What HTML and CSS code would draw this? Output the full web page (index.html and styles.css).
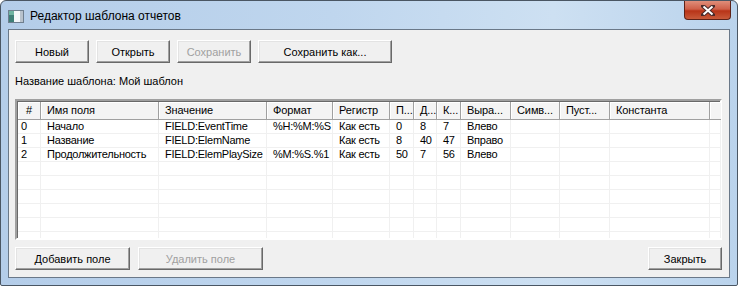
FILE: index.html
```html
<!DOCTYPE html>
<html lang="ru">
<head>
<meta charset="UTF-8">
<title>Редактор шаблона отчетов</title>
<link rel="stylesheet" href="styles.css">
</head>
<body>

<div class="window">
    <div class="titlebar">
        <svg class="app-icon" width="16" height="13" viewBox="0 0 16 13">
            <rect x="0.5" y="0.5" width="15" height="12" fill="#f4f7fa" stroke="#6f7f8f"/>
            <rect x="1" y="1" width="5" height="11" fill="#3f7f78"/>
            <rect x="1" y="1" width="5" height="4" fill="#6fb3a2"/>
            <rect x="12" y="1" width="3" height="11" fill="#b8c2cc"/>
        </svg>
        <span class="title">Редактор шаблона отчетов</span>
        <div class="close-btn">
            <svg width="14" height="11" viewBox="0 0 14 11">
                <path d="M2 1 L12 10 M12 1 L2 10" stroke="#4a2a2a" stroke-width="4" stroke-linecap="square"/>
                <path d="M2.5 1.5 L11.5 9.5 M11.5 1.5 L2.5 9.5" stroke="#fff" stroke-width="2"/>
            </svg>
        </div>
    </div>

    <div class="client">
        <!-- Template actions -->
        <div class="toolbar">
            <button class="btn">Новый</button>
            <button class="btn">Открыть</button>
            <button class="btn" disabled>Сохранить</button>
            <button class="btn btn-wide">Сохранить как...</button>
        </div>

        <div class="template-name">Название шаблона: Мой шаблон</div>

        <!-- Field list -->
        <div class="listview">
            <div class="grid">
                <div class="hd">#</div>
                <div class="hd">Имя поля</div>
                <div class="hd">Значение</div>
                <div class="hd">Формат</div>
                <div class="hd">Регистр</div>
                <div class="hd">П...</div>
                <div class="hd">Д...</div>
                <div class="hd">К...</div>
                <div class="hd">Выра...</div>
                <div class="hd">Симв...</div>
                <div class="hd">Пуст...</div>
                <div class="hd">Константа</div>
                <div class="hd hd-last"></div>

                <div class="cell num">0</div>
                <div class="cell">Начало</div>
                <div class="cell">FIELD:EventTime</div>
                <div class="cell">%H:%M:%S</div>
                <div class="cell">Как есть</div>
                <div class="cell">0</div>
                <div class="cell">8</div>
                <div class="cell">7</div>
                <div class="cell">Влево</div>
                <div class="cell"></div>
                <div class="cell"></div>
                <div class="cell"></div>
                <div class="cell"></div>

                <div class="cell num">1</div>
                <div class="cell">Название</div>
                <div class="cell">FIELD:ElemName</div>
                <div class="cell"></div>
                <div class="cell">Как есть</div>
                <div class="cell">8</div>
                <div class="cell">40</div>
                <div class="cell">47</div>
                <div class="cell">Вправо</div>
                <div class="cell"></div>
                <div class="cell"></div>
                <div class="cell"></div>
                <div class="cell"></div>

                <div class="cell num">2</div>
                <div class="cell">Продолжительность</div>
                <div class="cell">FIELD:ElemPlaySize</div>
                <div class="cell">%M:%S.%1</div>
                <div class="cell">Как есть</div>
                <div class="cell">50</div>
                <div class="cell">7</div>
                <div class="cell">56</div>
                <div class="cell">Влево</div>
                <div class="cell"></div>
                <div class="cell"></div>
                <div class="cell"></div>
                <div class="cell"></div>

                <div class="fill"></div><div class="fill"></div><div class="fill"></div>
                <div class="fill"></div><div class="fill"></div><div class="fill"></div>
                <div class="fill"></div><div class="fill"></div><div class="fill"></div>
                <div class="fill"></div><div class="fill"></div><div class="fill"></div>
                <div class="fill"></div>
            </div>
        </div>

        <div class="footer">
            <button class="btn btn-add">Добавить поле</button>
            <button class="btn btn-del" disabled>Удалить поле</button>
            <button class="btn btn-close">Закрыть</button>
        </div>
    </div>
</div>

</body>
</html>
```

FILE: styles.css
```css
body {
    margin: 0;
    padding: 0;
    background-color: #fff;
    font-family: "Liberation Sans", Arial, sans-serif;
    font-size: 11px;
    color: #000;
}

/* Window frame */
.window {
    width: 738px;
    height: 286px;
    box-sizing: border-box;
    border: 1px solid #4a5663;
    border-radius: 6px 6px 2px 2px;
    background: linear-gradient(to right, #b4cde9 0%, #bfd6ee 45%, #cde0f2 75%, #bad3ec 100%);
    padding: 0 7px 7px 7px;
    display: flex;
    flex-direction: column;
}

.titlebar {
    height: 28px;
    display: flex;
    align-items: flex-start;
    margin-right: -1px;
}

.app-icon {
    margin-top: 9px;
}

.title {
    font-family: "Liberation Sans", Arial, sans-serif;
    font-size: 12px;
    margin-left: 6px;
    margin-top: 8px;
    color: #000;
}

.close-btn {
    margin-left: auto;
    width: 45px;
    height: 18px;
    border: 1px solid #5e2218;
    border-top: none;
    border-radius: 0 0 4px 4px;
    background: linear-gradient(to bottom, #e08e7a 0%, #cf6049 45%, #b83418 55%, #c85a3a 100%);
    display: flex;
    align-items: center;
    justify-content: center;
}

/* Client area */
.client {
    flex: 1;
    background-color: #f0f0f0;
    border: 1px solid #6a7888;
    padding: 10px 7px 7px 6px;
    display: flex;
    flex-direction: column;
}

.toolbar {
    display: flex;
    gap: 7px;
}

.btn {
    width: 74px;
    height: 23px;
    box-sizing: border-box;
    padding: 0;
    font-family: "Liberation Sans", Arial, sans-serif;
    font-size: 11px;
    color: #000;
    background-color: #f0f0f0;
    border: 1px solid;
    border-color: #fff #696969 #696969 #fff;
    box-shadow: inset -1px -1px 0 #a0a0a0, inset 1px 1px 0 #e3e3e3;
}

.btn:disabled {
    color: #a0a0a0;
}

.btn-wide {
    width: 134px;
}

.template-name {
    margin-top: 12px;
    height: 13px;
    line-height: 13px;
}

/* List view */
.listview {
    margin-top: 11px;
    height: 141px;
    box-sizing: border-box;
    border: 2px solid;
    border-color: #a0a0a0 #fff #fff #a0a0a0;
    box-shadow: inset 1px 1px 0 #696969;
    background-color: #fff;
    padding: 1px 0 0 1px;
}

.grid {
    height: 100%;
    display: grid;
    grid-template-columns: 23px 118px 108px 66px 57px 24px 23px 24px 50px 49px 50px 100px 11px;
    grid-template-rows: 18px repeat(3, 14px) 1fr;
}

.hd {
    background-color: #f4f4f4;
    border-right: 1px solid #a0a0a0;
    border-bottom: 1px solid #a0a0a0;
    box-shadow: inset 1px 1px 0 #fff;
    padding-left: 6px;
    line-height: 17px;
    white-space: nowrap;
    overflow: hidden;
    letter-spacing: -0.1px;
}

.hd:first-child {
    padding-left: 8px;
}

.hd-last {
    border-right: none;
}

.cell {
    border-right: 1px solid #f0f0f0;
    border-bottom: 1px solid #f0f0f0;
    padding-left: 6px;
    line-height: 13px;
    white-space: nowrap;
    overflow: hidden;
    letter-spacing: -0.25px;
}

.cell.num {
    padding-left: 3px;
}

.fill {
    border-right: 1px solid #f0f0f0;
    background: repeating-linear-gradient(to bottom, transparent 0, transparent 13px, #f0f0f0 13px, #f0f0f0 14px);
}

/* Bottom buttons */
.footer {
    margin-top: 7px;
    display: flex;
    gap: 8px;
}

.btn-add {
    width: 115px;
}

.btn-del {
    width: 125px;
}

.btn-close {
    margin-left: auto;
}
```
